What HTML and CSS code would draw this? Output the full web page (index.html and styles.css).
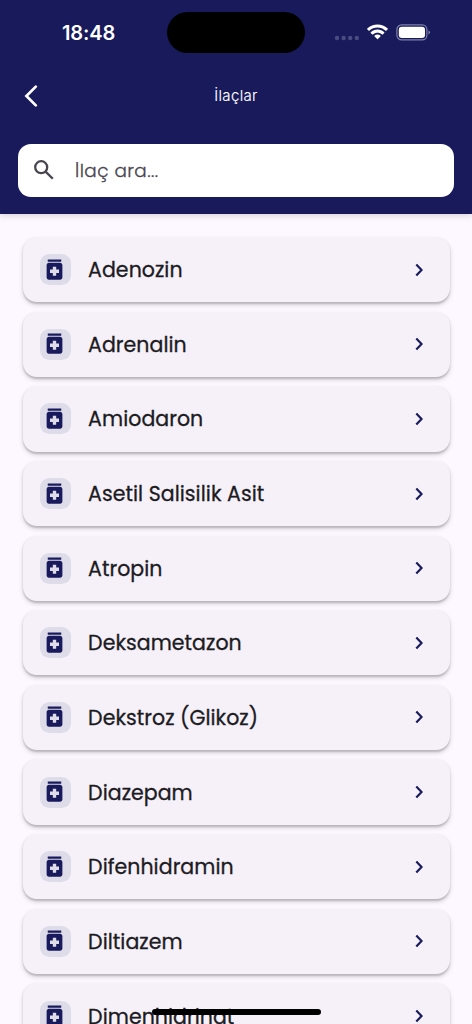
FILE: index.html
```html
<!DOCTYPE html>
<html lang="tr">
<head>
<meta charset="utf-8">
<meta name="viewport" content="width=device-width, initial-scale=1">
<title>İlaçlar</title>
<link rel="stylesheet" href="styles.css">
</head>
<body>
<svg class="symbols" aria-hidden="true">
  <symbol id="med" viewBox="0 0 24 24"><path d="M6 3h12v2H6zM17 6H7c-1.100 0-2 .9-2 2v11c0 1.100.9 2 2 2h10c1.100 0 2-.9 2-2V8c0-1.100-.9-2-2-2zm-1 9h-2.500v2.500h-3V15H8v-3h2.500V9.500h3V12H16v3z"/></symbol>
  <symbol id="next" viewBox="0 0 8 14"><path d="M1.300 1.400L6.600 7 1.300 12.600"/></symbol>
</svg>
<div class="screen">
  <header class="header">
    <div class="status">
      <span class="time">18:48</span>
      <span class="island"></span>
      <span class="indicators">
        <svg class="dots" viewBox="0 0 26 6"><circle cx="3" cy="3" r="2.200"/><circle cx="9.600" cy="3" r="2.200"/><circle cx="16.200" cy="3" r="2.200"/><circle cx="22.800" cy="3" r="2.200"/></svg>
        <svg class="wifi" viewBox="0 0 17 12.300"><path d="M8.500 2.600c2.500 0 4.800 1 6.600 2.600.1.100.3.100.5 0l1.200-1.300c.2-.1.200-.4 0-.5C12.200-1 4.800-1 .2 3.400c-.2.100-.2.400 0 .5l1.200 1.300c.1.100.3.100.5 0C3.700 3.500 6 2.600 8.500 2.600zm0 4.200c1.400 0 2.700.5 3.700 1.400.1.100.4.100.5 0L14 6.900c.1-.2.100-.4 0-.6-3.100-2.900-7.900-2.900-11 0-.1.200-.1.400 0 .6l1.300 1.300c.1.100.4.100.5 0 1-.9 2.300-1.400 3.700-1.400zm2.500 2.800c.1-.1.100-.4 0-.5-1.400-1.200-3.600-1.200-5 0-.1.100-.1.400 0 .5l2.200 2.300c.2.200.4.200.6 0z"/></svg>
        <svg class="battery" viewBox="0 0 35 17"><rect class="shell" x=".9" y=".9" width="30" height="15" rx="4.700"/><rect class="charge" x="2.800" y="2.800" width="26.200" height="11.200" rx="3"/><path class="tip" d="M32.500 6.200q3 2.200 0 4.400z"/></svg>
      </span>
    </div>
    <div class="appbar">
      <svg class="back" viewBox="0 0 14 22"><path d="M11.800 1.600L2.400 11 11.800 20.400"/></svg>
      <h1 class="title">İlaçlar</h1>
    </div>
    <div class="search">
      <svg class="lens" viewBox="0 0 20 20"><circle cx="7.200" cy="7.200" r="6"/><path d="M11.600 11.600l7.200 7.200"/></svg>
      <span class="hint">İlaç ara...</span>
    </div>
  </header>
  <main class="list">
    <div class="card"><span class="badge"><svg><use href="#med"/></svg></span><span class="name">Adenozin</span><svg class="chevron"><use href="#next"/></svg></div>
    <div class="card"><span class="badge"><svg><use href="#med"/></svg></span><span class="name">Adrenalin</span><svg class="chevron"><use href="#next"/></svg></div>
    <div class="card"><span class="badge"><svg><use href="#med"/></svg></span><span class="name">Amiodaron</span><svg class="chevron"><use href="#next"/></svg></div>
    <div class="card"><span class="badge"><svg><use href="#med"/></svg></span><span class="name">Asetil Salisilik Asit</span><svg class="chevron"><use href="#next"/></svg></div>
    <div class="card"><span class="badge"><svg><use href="#med"/></svg></span><span class="name">Atropin</span><svg class="chevron"><use href="#next"/></svg></div>
    <div class="card"><span class="badge"><svg><use href="#med"/></svg></span><span class="name">Deksametazon</span><svg class="chevron"><use href="#next"/></svg></div>
    <div class="card"><span class="badge"><svg><use href="#med"/></svg></span><span class="name">Dekstroz (Glikoz)</span><svg class="chevron"><use href="#next"/></svg></div>
    <div class="card"><span class="badge"><svg><use href="#med"/></svg></span><span class="name">Diazepam</span><svg class="chevron"><use href="#next"/></svg></div>
    <div class="card"><span class="badge"><svg><use href="#med"/></svg></span><span class="name">Difenhidramin</span><svg class="chevron"><use href="#next"/></svg></div>
    <div class="card"><span class="badge"><svg><use href="#med"/></svg></span><span class="name">Diltiazem</span><svg class="chevron"><use href="#next"/></svg></div>
    <div class="card"><span class="badge"><svg><use href="#med"/></svg></span><span class="name">Dimenhidrinat</span><svg class="chevron"><use href="#next"/></svg></div>
  </main>
  <div class="home"></div>
</div>
</body>
</html>
```
FILE: styles.css
```css
* { box-sizing: border-box; }
body { margin: 0; font-family: Poppins, Inter, sans-serif; }
.symbols { display: none; }
.screen { position: relative; width: 472px; height: 1024px; overflow: hidden; background: #fdf7ff; }
.header { height: 214.3px; background: #181a5c; box-shadow: 0 2px 6px rgba(0, 0, 0, .14); }
.status { display: grid; grid-template-columns: 167px 138px 1fr; height: 65px; align-items: center; }
.time { padding-left: 62px; color: #fff; font: 600 20px/24px Inter, sans-serif; letter-spacing: -.1px; }
.island { height: 40.500px; border-radius: 21px; background: #000; }
.indicators { display: flex; align-items: center; padding-left: 29px; }
.dots { width: 26px; height: 6px; margin-top: 10px; fill: #4a4c80; }
.wifi { width: 21px; height: 16px; margin-left: 7px; margin-top: -1px; fill: #fff; }
.battery { width: 35px; height: 17px; margin-left: 8px; margin-top: -1px; }
.shell { fill: none; stroke: #7f80a8; stroke-width: 1.200; }
.charge { fill: #fff; }
.tip { fill: #8586ab; }
.appbar { display: grid; grid-template-columns: 60px 1fr 60px; align-items: center; height: 62px; }
.back { width: 14px; height: 22px; margin-left: 24px; fill: none; stroke: #fff; stroke-width: 2.700; stroke-linecap: round; }
.title { margin: 0; color: #fff; font: 300 15px/20px Inter, sans-serif; letter-spacing: .35px; text-align: center; -webkit-text-stroke: .15px #fff; }
.search { display: flex; align-items: center; height: 52.500px; margin: 17.200px 18px 0; padding-left: 16px; border-radius: 13px; background: #fff; }
.lens { width: 20px; height: 20px; fill: none; stroke: #49454f; stroke-width: 2.300; }
.hint { margin-left: 21px; padding-top: 1px; color: #49454f; font-size: 18.400px; font-weight: 300; letter-spacing: .45px; -webkit-text-stroke: .3px #49454f; }
.list { display: flex; flex-direction: column; gap: 9.350px; padding: 22.700px 22.500px 0; }
.card { display: flex; flex: none; align-items: center; height: 65.300px; padding: 0 27px 0 17.500px; border-radius: 14px; background: #f6f1f9; box-shadow: 0 1.200px 2px rgba(0, 0, 0, .17), 0 3px 5px rgba(0, 0, 0, .14); }
.badge { display: grid; place-items: center; width: 30.500px; height: 31px; border-radius: 9.300px; background: #dfdcea; }
.badge svg { width: 27px; height: 27px; margin: 0 1px 1px 0; fill: #181a5c; }
.name { margin-left: 17.600px; padding-top: 1px; color: #1c1b1f; -webkit-text-stroke: .3px #1c1b1f; font-size: 20.500px; font-weight: 400; letter-spacing: .05px; line-height: 30px; white-space: nowrap; }
.chevron { width: 8px; height: 14px; margin-left: auto; fill: none; stroke: #181a5c; stroke-width: 2.200; }
.home { position: absolute; left: 152px; top: 1009.300px; width: 168.500px; height: 5.700px; border-radius: 3px; background: #000; }
```
